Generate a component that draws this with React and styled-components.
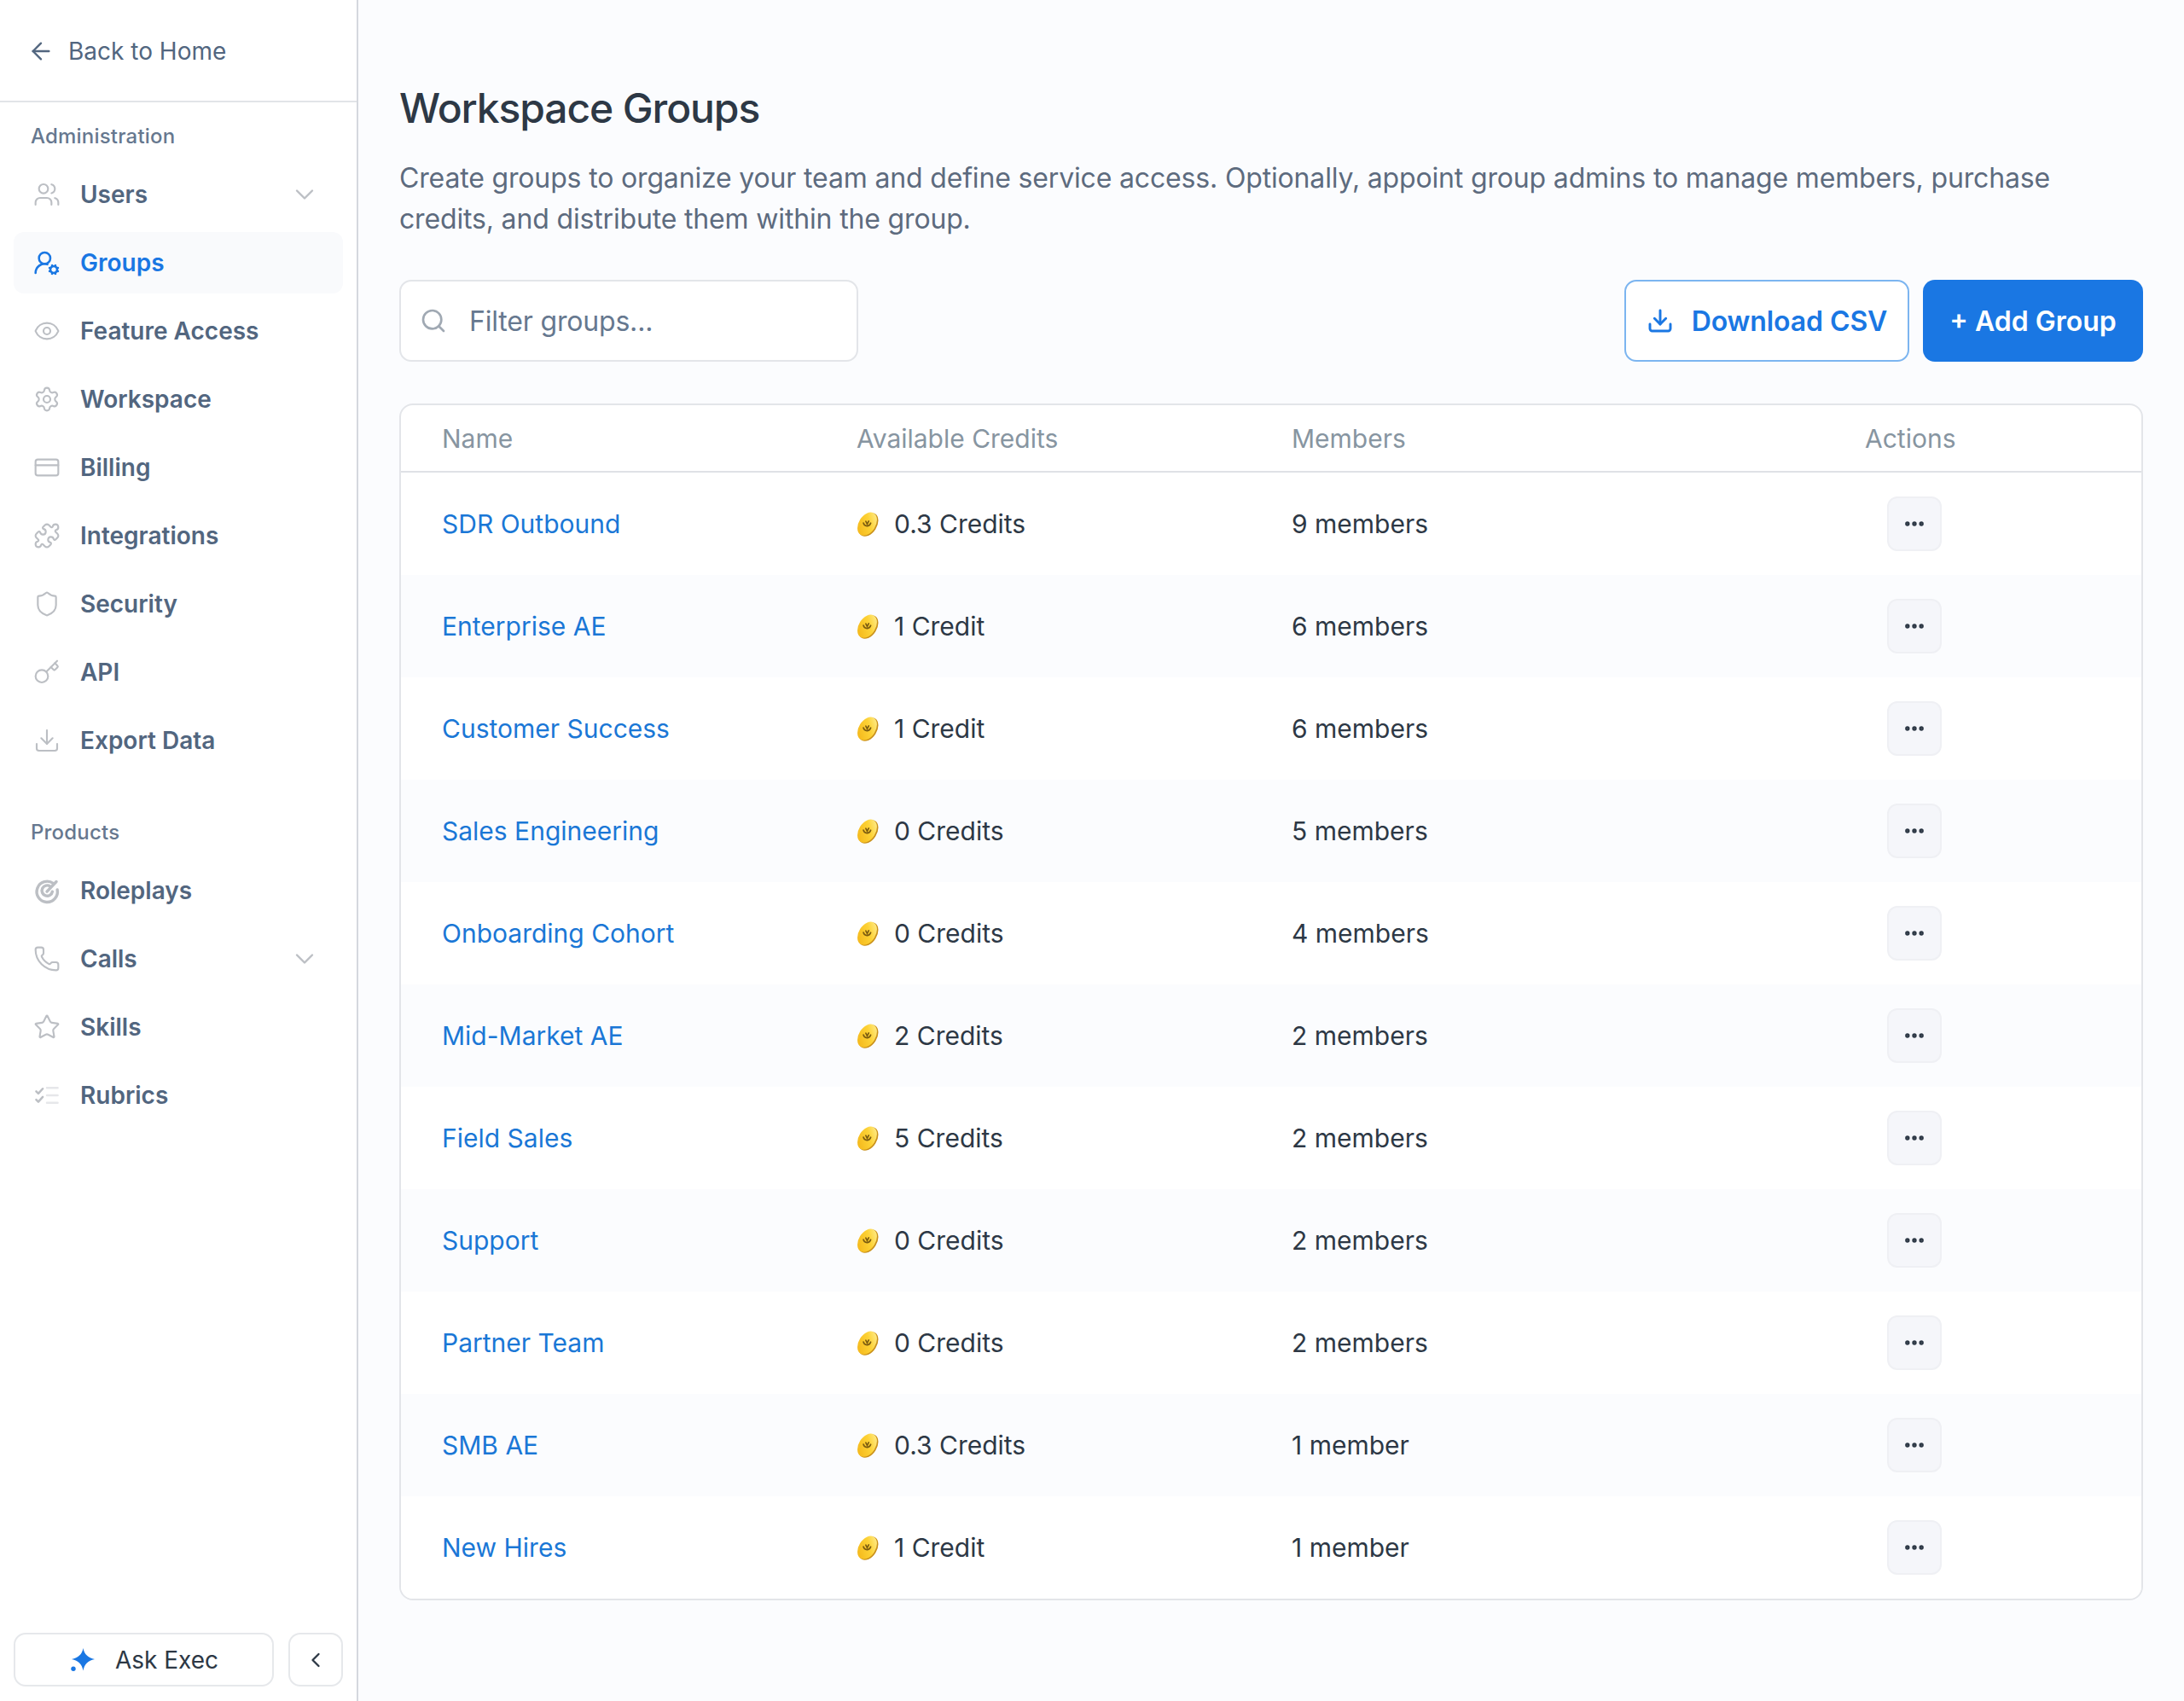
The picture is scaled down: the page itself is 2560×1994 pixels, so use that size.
import React from 'react';
import styled, { createGlobalStyle } from 'styled-components';
import {
  ArrowLeft, Users, UserRoundCog, Eye, Settings, CreditCard, Puzzle, Shield, Key,
  Download, Phone, Star, ChevronDown, ChevronLeft, Search, Ellipsis,
} from 'lucide-react';

const Global = createGlobalStyle`
  * { box-sizing: border-box; }
  html, body { margin: 0; padding: 0; background: #fbfcfe; }
  body { font-family: Inter, "Liberation Sans", sans-serif; color: #2d3845; }
`;

const Shell = styled.div`
  display: flex;
  width: 2560px;
  height: 1994px;
  overflow: hidden;
`;
const Sidebar = styled.aside`
  width: 420px;
  flex: none;
  display: flex;
  flex-direction: column;
  background: #fff;
  border-right: 2px solid #d5d8de;
`;
const BackBar = styled.div`
  height: 120px;
  flex: none;
  display: flex;
  align-items: center;
  gap: 16px;
  padding: 2px 0 0 32px;
  border-bottom: 2px solid #e2e4e8;
  color: #52667f;
  font-size: 28px;
  svg { width: 32px; height: 32px; }
`;
const SectionLabel = styled.div`
  height: 40px;
  margin: ${p => p.$top}px 0 13px 36px;
  display: flex;
  align-items: center;
  font-size: 24px;
  letter-spacing: 0.2px;
  font-weight: 500;
  color: #66788f;
`;
const Nav = styled.nav`
  display: flex;
  flex-direction: column;
  gap: 8px;
  padding: 0 16px;
`;
const NavItem = styled.div`
  height: 72px;
  display: flex;
  align-items: center;
  gap: 23px;
  padding: 0 27px 0 23px;
  border-radius: 12px;
  font-size: 28px;
  font-weight: 600;
  color: ${p => (p.$active ? '#1a77e3' : '#52667f')};
  background: ${p => (p.$active ? '#f9fafc' : 'transparent')};
  > svg:first-child { flex: none; width: 32px; height: 32px; color: ${p => (p.$active ? '#1a77e3' : '#bcbfc4')}; }
`;
const NavText = styled.span`
  flex: 1;
`;
const Chevron = styled(ChevronDown)`
  flex: none;
  width: 36px;
  height: 36px;
  color: #bcbfc4;
`;
const Footer = styled.div`
  margin-top: auto;
  display: flex;
  gap: 17px;
  padding: 0 16px 17px;
`;
const AskButton = styled.div`
  flex: 1;
  height: 63px;
  display: flex;
  align-items: center;
  justify-content: center;
  gap: 24px;
  padding-left: 2px;
  border: 2px solid #e6e8eb;
  border-radius: 14px;
  font-size: 28px;
  color: #2d3845;
`;
const CollapseButton = styled.div`
  width: 64px;
  height: 63px;
  display: flex;
  align-items: center;
  justify-content: center;
  border: 2px solid #e6e8eb;
  border-radius: 14px;
  color: #2d3845;
  svg { width: 28px; height: 28px; }
`;
const Main = styled.main`
  flex: 1;
  padding: 95px 48px 0 48px;
  min-width: 0;
`;
const Title = styled.h1`
  margin: 0;
  font-size: 48px;
  line-height: 64px;
  letter-spacing: -1.1px;
  font-weight: 500;
  color: #2d3845;
`;
const Description = styled.p`
  margin: 26px 0 47px;
  font-size: 32px;
  line-height: 48px;
  letter-spacing: -0.16px;
  color: #5d6b7e;
`;
const Toolbar = styled.div`
  display: flex;
  align-items: center;
  justify-content: space-between;
  margin-bottom: 49px;
`;
const FilterBox = styled.div`
  width: 538px;
  height: 96px;
  display: flex;
  align-items: center;
  gap: 26px;
  padding-left: 22px;
  background: #fff;
  border: 2px solid #e3e5e9;
  border-radius: 14px;
  color: #66788f;
  font-size: 32px;
  letter-spacing: -0.18px;
  svg { width: 32px; height: 32px; color: #a0a9b3; }
`;
const ButtonRow = styled.div`
  display: flex;
  gap: 16px;
`;
const OutlineButton = styled.div`
  width: 334px;
  height: 96px;
  display: flex;
  align-items: center;
  justify-content: center;
  gap: 21px;
  background: #fff;
  border: 2px solid #7cb5f0;
  border-radius: 14px;
  color: #1a77e3;
  font-size: 32px;
  letter-spacing: -0.1px;
  font-weight: 600;
  svg { width: 32px; height: 32px; }
`;
const PrimaryButton = styled.div`
  width: 258px;
  height: 96px;
  display: flex;
  align-items: center;
  justify-content: center;
  background: #1a77e3;
  border-radius: 14px;
  color: #fff;
  font-size: 32px;
  font-weight: 600;
`;
const Table = styled.div`
  background: #fff;
  border: 2px solid #e3e5e9;
  border-radius: 16px;
  overflow: hidden;
`;
const columns = '486px 510px 672px 1fr';
const HeadRow = styled.div`
  height: 79px;
  display: grid;
  grid-template-columns: ${columns};
  align-items: center;
  border-bottom: 2px solid #dfe1e6;
  color: #8795a1;
  font-size: 30px;
`;
const Row = styled.div`
  height: 120px;
  display: grid;
  grid-template-columns: ${columns};
  align-items: center;
  background: ${p => (p.$alt ? '#fbfcfe' : '#fff')};
  font-size: 30px;
`;
const Cell = styled.div`
  padding-left: 48px;
  display: flex;
  align-items: center;
`;
const NameLink = styled.a`
  color: #1a77d6;
`;
const CreditText = styled.span`
  margin-left: 18px;
`;
const ActionButton = styled.div`
  width: 64px;
  height: 64px;
  margin-left: 26px;
  display: flex;
  align-items: center;
  justify-content: center;
  background: #f5f6fa;
  border: 2px solid #eff0f4;
  border-radius: 12px;
  color: #2d3845;
  svg { width: 28px; height: 28px; }
`;

const RoleplayIcon = () => (
  <svg viewBox="-2.500 -2.500 29 29" fill="none" stroke="currentColor" strokeWidth="3.100" strokeLinecap="round">
    <path d="M18.800 4.400A11 11 0 1 0 23 11" />
    <path d="M15.500 7.500A5.600 5.600 0 1 0 17.800 13" />
    <path d="M12 13l10-10.500" />
  </svg>
);
const RubricIcon = () => (
  <svg viewBox="-2 -2 28 28" fill="none" stroke="currentColor" strokeWidth="2.200" strokeLinecap="round" strokeLinejoin="round">
    <path d="M1 8l2.200 2.200 4.500-5" />
    <path d="M1 16.500l2.200 2.200 4.500-5" />
    <path d="M12 4.300h11M12 12h11M12 19.700h11" stroke="#e6e7ea" />
  </svg>
);
const SparkIcon = () => (
  <svg width="28" height="27" viewBox="0 0 28 27" fill="#1a77e3">
    <path d="M14.500 0C16 7.500 20 11 28 13C20 15 16 18.500 14.500 26.500C13 18.500 9 15 1 13C9 11 13 7.500 14.500 0Z" />
    <circle cx="3" cy="24.200" r="2.700" />
  </svg>
);
const CoinIcon = () => (
  <svg width="26" height="29" viewBox="0 0 26 29">
    <defs>
      <linearGradient id="coinFace" x1="0.9" y1="0" x2="0.3" y2="1">
        <stop offset="0" stopColor="#fff09a" />
        <stop offset="0.45" stopColor="#fdd235" />
        <stop offset="1" stopColor="#f4b81c" />
      </linearGradient>
    </defs>
    <g transform="rotate(32 13 14.500)">
      <ellipse cx="14" cy="14.500" rx="10" ry="15" fill="#c9901a" />
      <ellipse cx="12.400" cy="14.500" rx="9.800" ry="14.800" fill="url(#coinFace)" />
      <g fill="none" stroke="#7c5c10" strokeWidth="1.700" strokeLinecap="round">
        <path d="M8 13.500c1 4.500 7 4.500 8.500 0" transform="rotate(-32 12.400 14.500)" />
        <path d="M10.800 11.500l1.600 3.200 1.800-3.500" transform="rotate(-32 12.400 14.500)" />
      </g>
    </g>
  </svg>
);

const adminItems = [
  { label: 'Users', Icon: Users, chevron: true },
  { label: 'Groups', Icon: UserRoundCog, active: true },
  { label: 'Feature Access', Icon: Eye },
  { label: 'Workspace', Icon: Settings },
  { label: 'Billing', Icon: CreditCard },
  { label: 'Integrations', Icon: Puzzle },
  { label: 'Security', Icon: Shield },
  { label: 'API', Icon: Key },
  { label: 'Export Data', Icon: Download },
];
const productItems = [
  { label: 'Roleplays', Icon: RoleplayIcon },
  { label: 'Calls', Icon: Phone, chevron: true },
  { label: 'Skills', Icon: Star },
  { label: 'Rubrics', Icon: RubricIcon },
];
const groups = [
  ['SDR Outbound', '0.3 Credits', '9 members'],
  ['Enterprise AE', '1 Credit', '6 members'],
  ['Customer Success', '1 Credit', '6 members'],
  ['Sales Engineering', '0 Credits', '5 members'],
  ['Onboarding Cohort', '0 Credits', '4 members'],
  ['Mid-Market AE', '2 Credits', '2 members'],
  ['Field Sales', '5 Credits', '2 members'],
  ['Support', '0 Credits', '2 members'],
  ['Partner Team', '0 Credits', '2 members'],
  ['SMB AE', '0.3 Credits', '1 member'],
  ['New Hires', '1 Credit', '1 member'],
];

const NavList = ({ items }) => (
  <Nav>
    {items.map(({ label, Icon, chevron, active }) => (
      <NavItem key={label} $active={active}>
        <Icon strokeWidth={active ? 1.9 : 1.6} />
        <NavText>{label}</NavText>
        {chevron && <Chevron strokeWidth={1.6} />}
      </NavItem>
    ))}
  </Nav>
);

export default function App() {
  return (
    <Shell>
      <Global />
      <Sidebar>
        <BackBar><ArrowLeft strokeWidth={1.8} />Back to Home</BackBar>
        <SectionLabel $top={19}>Administration</SectionLabel>
        <NavList items={adminItems} />
        <SectionLabel $top={51}>Products</SectionLabel>
        <NavList items={productItems} />
        <Footer>
          <AskButton><SparkIcon />Ask Exec</AskButton>
          <CollapseButton><ChevronLeft strokeWidth={2} /></CollapseButton>
        </Footer>
      </Sidebar>
      <Main>
        <Title>Workspace Groups</Title>
        <Description>
          Create groups to organize your team and define service access. Optionally, appoint group admins to manage members, purchase credits, and distribute them within the group.
        </Description>
        <Toolbar>
          <FilterBox><Search strokeWidth={2} />Filter groups...</FilterBox>
          <ButtonRow>
            <OutlineButton><Download strokeWidth={2.2} />Download CSV</OutlineButton>
            <PrimaryButton>+ Add Group</PrimaryButton>
          </ButtonRow>
        </Toolbar>
        <Table>
          <HeadRow>
            <Cell>Name</Cell>
            <Cell>Available Credits</Cell>
            <Cell>Members</Cell>
            <Cell>Actions</Cell>
          </HeadRow>
          {groups.map(([name, credits, members], i) => (
            <Row key={name} $alt={i % 2 === 1}>
              <Cell><NameLink>{name}</NameLink></Cell>
              <Cell><CoinIcon /><CreditText>{credits}</CreditText></Cell>
              <Cell>{members}</Cell>
              <Cell><ActionButton><Ellipsis strokeWidth={2.6} /></ActionButton></Cell>
            </Row>
          ))}
        </Table>
      </Main>
    </Shell>
  );
}
